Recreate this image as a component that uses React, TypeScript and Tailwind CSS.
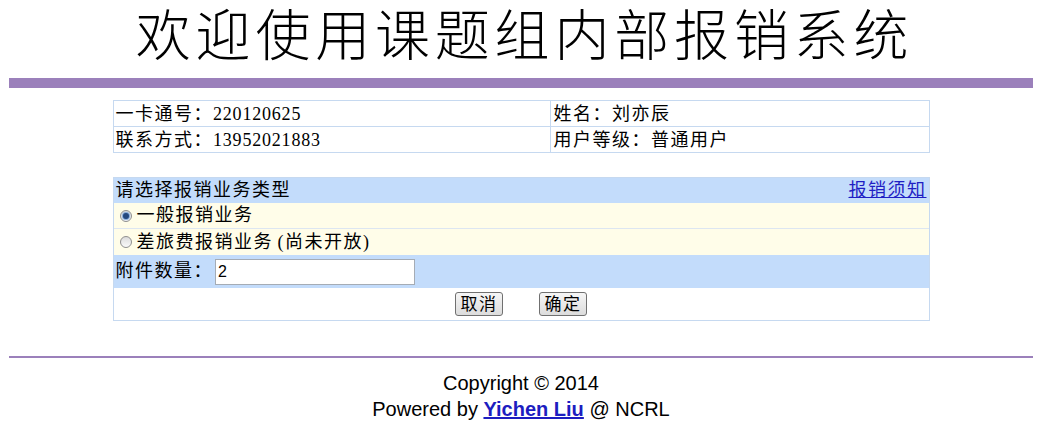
import React from "react";

const cjk = '"Liberation Serif", "Noto Sans CJK SC", serif';
const sans = '"Liberation Sans", Arial, sans-serif';

function Radio({ checked }: { checked?: boolean }) {
  return (
    <span className="inline-flex h-[12px] w-[12px] items-center justify-center rounded-full border border-[#8f8f8f] bg-gradient-to-b from-[#dcdcdc] to-[#fafafa]">
      {checked && <span className="h-[6px] w-[6px] rounded-full bg-[#24477e] shadow-[0_0_1px_1px_#7aa2d8]" />}
    </span>
  );
}

function Btn({ children }: { children: React.ReactNode }) {
  return (
    <button className="h-[24px] w-[48px] rounded-[3px] border border-[#707070] bg-gradient-to-b from-[#f6f6f6] to-[#dcdcdc] text-[17px] leading-none text-black">
      {children}
    </button>
  );
}

export default function App() {
  return (
    <div className="min-h-[424px] bg-white text-black" style={{ fontFamily: cjk }}>
      <div className="h-[78px] pt-[2px]">
        <h1
          className="text-center text-[55px] font-light leading-[58px] tracking-[4.8px] text-black"
          style={{ fontFamily: '"Noto Sans CJK SC", sans-serif' }}
        >
          欢迎使用课题组内部报销系统
        </h1>
      </div>
      <div className="ml-[9px] mr-[16px]">
        <div className="h-[10px] bg-[#9b80bb]" />

        <table className="mx-auto mt-[12px] w-[817px] border-collapse text-[18px] tracking-[1.5px]">
          <tbody>
            <tr className="h-[26px]">
              <td className="w-[437px] border border-[#c6d9f0] px-[2px] py-0 leading-[24px]">
                一卡通号：<span className="tracking-[0.8px]">220120625</span>
              </td>
              <td className="border border-[#c6d9f0] px-[3px] py-0 leading-[24px]">姓名：刘亦辰</td>
            </tr>
            <tr className="h-[26px]">
              <td className="border border-[#c6d9f0] px-[2px] py-0 leading-[24px]">
                联系方式：<span className="tracking-[0.8px]">13952021883</span>
              </td>
              <td className="border border-[#c6d9f0] px-[3px] py-0 leading-[24px]">用户等级：普通用户</td>
            </tr>
          </tbody>
        </table>

        <div className="mx-auto mt-[24px] w-[817px] border border-[#c6d9f0] text-[18px] tracking-[1.5px]">
          <div className="flex h-[25px] items-center justify-between bg-[#c3dcfb] px-[2px]">
            <span>请选择报销业务类型</span>
            <a href="#" className="text-[#1f1fc4] underline">报销须知</a>
          </div>
          <div className="flex h-[26px] items-center gap-[5px] border-b border-[#dde6f1] bg-[#fffde9] pl-[6px]">
            <Radio checked />
            <span>一般报销业务</span>
          </div>
          <div className="flex h-[26px] items-center gap-[5px] bg-[#fffde9] pl-[6px]">
            <Radio />
            <span>
              差旅费报销业务<span className="inline-block w-[12px] text-right">(</span>尚未开放
              <span className="inline-block w-[12px] text-left">)</span>
            </span>
          </div>
          <div className="flex h-[33px] items-center gap-[2px] bg-[#c3dcfb] px-[2px]">
            <span>附件数量：</span>
            <input
              defaultValue="2"
              className="h-[26px] w-[200px] border border-[#a5acb5] bg-white px-[2px] text-[16px] tracking-normal outline-none"
              style={{ fontFamily: sans }}
            />
          </div>
          <div className="flex h-[32px] items-center justify-center gap-[36px] bg-white">
            <Btn>取消</Btn>
            <Btn>确定</Btn>
          </div>
        </div>

        <div className="mt-[35px] h-[2px] bg-[#9b80bb]" />

        <div className="pt-[12px] text-center text-[20px] leading-[26px]" style={{ fontFamily: sans }}>
          <div>Copyright © 2014</div>
          <div>
            Powered by{" "}
            <a href="#" className="font-bold text-[#1d1dc0] underline">
              Yichen Liu
            </a>{" "}
            @ NCRL
          </div>
        </div>
      </div>
    </div>
  );
}
